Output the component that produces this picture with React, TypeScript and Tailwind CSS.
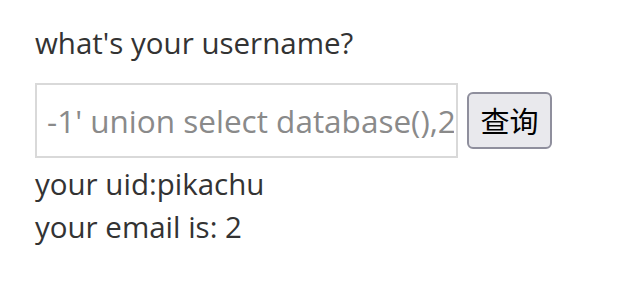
import React from "react";

export default function App() {
  return (
    <div
      className="w-[641px] h-[296px] bg-white pl-[35px] pt-[23px] text-[#333333]"
      style={{ fontFamily: '"Open Sans", "Noto Sans CJK SC", sans-serif' }}
    >
      <p className="text-[29.5px] leading-[40px]">what's your username?</p>
      <div className="mt-[20px] flex items-center gap-[9px]">
        <input
          readOnly
          value="-1' union select database(),2#"
          className="w-[423px] h-[75px] border-2 border-[#d9d9d9] pl-[10px] pr-[2px] text-[31.5px] text-[#8a8a8a] outline-none bg-white"
          style={{ fontFamily: '"Open Sans", sans-serif' }}
        />
        <button
          className="w-[85px] h-[57px] rounded-[6px] border-2 border-[#8f8f9d] bg-[#e9e9ed] text-[29px] text-black"
          style={{ fontFamily: '"Noto Sans CJK SC", sans-serif' }}
        >
          查询
        </button>
      </div>
      <p className="text-[29.5px] leading-[43px] mt-[4px]">your uid:pikachu</p>
      <p className="text-[29.5px] leading-[43px]">your email is: 2</p>
    </div>
  );
}
